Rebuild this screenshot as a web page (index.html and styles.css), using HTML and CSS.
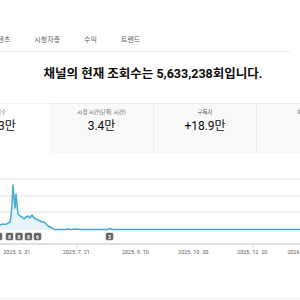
FILE: index.html
```html
<!DOCTYPE html>
<html lang="ko">
<head>
<meta charset="utf-8">
<title>채널 분석</title>
<link rel="stylesheet" href="styles.css">
</head>
<body>
<div class="page">
  <nav class="tabs">
    <span class="tab">콘텐츠</span>
    <span class="tab">시청자층</span>
    <span class="tab">수익</span>
    <span class="tab">트렌드</span>
  </nav>
  <h1 class="title">채널의 현재 조회수는 5,633,238회입니다.</h1>
  <div class="cards">
    <div class="card selected">
      <div class="label">조회수</div>
      <div class="value">51.3만</div>
    </div>
    <div class="card">
      <div class="label">시청 시간(단위: 시간)</div>
      <div class="value">3.4만</div>
    </div>
    <div class="card">
      <div class="label">구독자</div>
      <div class="value">+18.9만</div>
    </div>
    <div class="card">
      <div class="label">예상 수익</div>
      <div class="value">—</div>
    </div>
  </div>
  <div class="chart">
    <svg class="chart-svg" width="412" height="107" viewBox="-53 153 412 107" xmlns="http://www.w3.org/2000/svg">
      <g class="grid">
        <line x1="-53" y1="179" x2="359" y2="179"/>
        <line x1="-53" y1="196" x2="359" y2="196"/>
        <line x1="-53" y1="212" x2="359" y2="212"/>
      </g>
      <path class="area" d="M-53 226 L-20 225 L0 225 L3 224 L6 224.5 L8 223 L10 222 L11 216 L12 205 L13 185 L14 198 L15 208 L16 194 L17 205 L18 214 L20 216 L22 217 L24 219 L26 217 L28 216 L30 218 L32 215 L34 218 L36 219 L38 220 L40 221 L42 222 L44 222 L46 224 L48 226 L50 227 L52 228 L54 229.5 L66 229.5 L68 229 L70 229.5 L76 229 L80 229.5 L108 229.5 L110 228.3 L112 229.5 L359 229.5 L359 230 L-53 230 Z"/>
      <path class="line" d="M-53 226 L-20 225 L0 225 L3 224 L6 224.5 L8 223 L10 222 L11 216 L12 205 L13 185 L14 198 L15 208 L16 194 L17 205 L18 214 L20 216 L22 217 L24 219 L26 217 L28 216 L30 218 L32 215 L34 218 L36 219 L38 220 L40 221 L42 222 L44 222 L46 224 L48 226 L50 227 L52 228 L54 229.5 L66 229.5 L68 229 L70 229.5 L76 229 L80 229.5 L108 229.5 L110 228.3 L112 229.5 L359 229.5"/>
      <g class="marker">
        <rect x="-5" y="233" width="7" height="7" rx="1"/>
        <rect x="6" y="233" width="7" height="7" rx="1"/>
        <rect x="15.5" y="233" width="7" height="7" rx="1"/>
        <rect x="25" y="233" width="7" height="7" rx="1"/>
        <rect x="34" y="233" width="7" height="7" rx="1"/>
        <rect x="106" y="233" width="7" height="7" rx="1"/>
      </g>
      <g class="marker-text">
        <text x="-1.5" y="238.6">8</text>
        <text x="9.5" y="238.6">8</text>
        <text x="19" y="238.6">8</text>
        <text x="28.5" y="238.6">8</text>
        <text x="37.5" y="238.6">6</text>
        <text x="109.5" y="238.6">3</text>
      </g>
      <line class="axis" x1="-53" y1="244" x2="359" y2="244"/>
      <line class="tick" x1="77" y1="245" x2="77" y2="248"/>
      <line class="tick" x1="253" y1="245" x2="253" y2="248"/>
      <g class="dates">
        <text x="17.5" y="254">2025. 5. 31.</text>
        <text x="77" y="254">2025. 7. 21.</text>
        <text x="136" y="254">2025. 9. 10.</text>
        <text x="194" y="254">2025. 10. 30.</text>
        <text x="253" y="254">2025. 12. 20.</text>
        <text x="300" y="254">2026. 2. 9.</text>
      </g>
    </svg>
  </div>
  <div class="footer-line"></div>
</div>
</body>
</html>
```
FILE: styles.css
```css
html, body {
  margin: 0;
  padding: 0;
  background: #ffffff;
}

body {
  overflow: hidden;
  font-family: Roboto, "Noto Sans CJK KR", "Noto Sans", sans-serif;
  color: #0d0d0d;
}

.page {
  margin-left: -53px;
  width: 412px;
  padding-top: 30px;
}

.tabs {
  display: flex;
  margin-left: 32px;
  width: 311px;
  height: 21px;
  border-bottom: 1px solid #ececec;
}

.tab {
  padding: 0 12px;
  font-size: 7px;
  line-height: 21px;
  color: #606060;
  white-space: nowrap;
}

.title {
  margin: 13px 0 20px;
  font-size: 12.5px;
  line-height: 18px;
  font-weight: 700;
  text-align: center;
  color: #0d0d0d;
}

.cards {
  display: grid;
  grid-template-columns: repeat(4, 103px);
  height: 50px;
}

.card {
  background: #f9f9f9;
  border-top: 1px solid #ececec;
  text-align: center;
  padding-top: 4px;
  box-sizing: border-box;
}

.card.selected {
  background: #ffffff;
  border-top-color: #f4f4f4;
}

.card + .card + .card {
  border-left: 1px solid #ececec;
}

.label {
  font-size: 5.5px;
  line-height: 8px;
  color: #606060;
  white-space: nowrap;
}

.value {
  margin-top: 3px;
  font-size: 12px;
  line-height: 14px;
  color: #0d0d0d;
  white-space: nowrap;
}

.chart-svg {
  display: block;
}

.grid line {
  stroke: #f0f0f0;
  stroke-width: 2;
}

.area {
  fill: #e6f4fa;
}

.line {
  fill: none;
  stroke: #45a9d5;
  stroke-width: 1.5;
  stroke-linejoin: round;
}

.marker rect {
  fill: #5f5f5f;
  stroke: #8a8a8a;
  stroke-width: 0.6;
}

.marker-text text {
  fill: #ffffff;
  font-size: 5px;
  font-weight: 700;
  text-anchor: middle;
  font-family: Roboto, sans-serif;
}

.axis {
  stroke: #e0e0e0;
  stroke-width: 2;
}

.tick {
  stroke: #dcdcdc;
  stroke-width: 1;
}

.dates text {
  fill: #606060;
  font-size: 5.5px;
  text-anchor: middle;
  font-family: Roboto, sans-serif;
}

.footer-line {
  margin-top: 38px;
  height: 1px;
  background: #efefef;
}
```
